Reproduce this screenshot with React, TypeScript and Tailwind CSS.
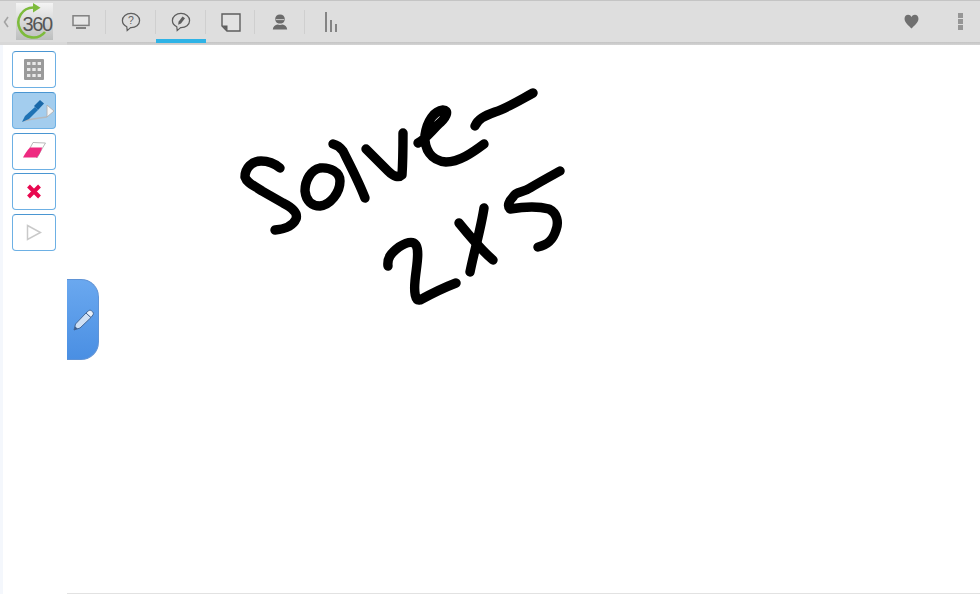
import type { ReactNode } from 'react';

function NavItem({ children, active, last }: { children: ReactNode; active?: boolean; last?: boolean }) {
  return (
    <div className={`relative flex h-full w-[49.8px] items-center justify-center pt-[1px] ${last ? '' : 'after:absolute after:right-0 after:top-[9px] after:h-[24px] after:w-px after:bg-[#cfcfcf]'}`}>
      {children}
      {active && <div className="absolute bottom-[-1px] left-0 h-[4px] w-full bg-[#2fb3e6]" />}
    </div>
  );
}

function ToolButton({ children, active }: { children: ReactNode; active?: boolean }) {
  return (
    <button
      className={`relative flex h-[37px] w-[44px] items-center justify-center rounded-[4px] border-[1.5px] border-[#6db0e4] border-t-[#4a96d2] ${active ? 'bg-[#a3cdee]' : 'bg-white'}`}
    >
      {children}
    </button>
  );
}

function Logo() {
  return (
    <div className="relative h-[37px] w-[37px] overflow-hidden bg-gradient-to-b from-[#f4f4f4] to-[#bcbebe]">
      <svg className="absolute left-0 top-0" width="37" height="37" viewBox="0 0 37 37" fill="none">
        <path d="M29 29 A15 15 0 1 1 17.5 4.5" stroke="#7dbb3c" strokeWidth="2.6" />
        <path d="M17 0 L24.5 4.8 L17 9.6 Z" fill="#7dbb3c" />
      </svg>
      <span className="absolute left-[6.5px] top-[9px] font-['Liberation_Sans',sans-serif] text-[20px] leading-[24px] tracking-[-1.4px] text-[#555]">
        360
      </span>
    </div>
  );
}

// the handwritten ink on the whiteboard
const inkStrokes = [
  'M280 168 C274 163 268 161 261 161 C252 161 245 168 245 177 C247 183 253 185 262 191 L283 203 C293 208 298 213 296 219 C293 226 285 229 275 230',
  'M320 168 C311 170 305 180 305 191 C306 201 312 206 320 206 C330 205 340 193 340 181 C340 172 330 167 320 168 Z',
  'M333 144 C337 145 340 147 343 151 C350 165 359 182 365 198',
  'M366 149 L388 171 C394 177 399 178 402 175 C403 160 403 147 403 133',
  'M418 143 C426 139 432 130 441 122 C447 116 449 110 443 110 C434 111 427 121 425 135 C424 149 431 161 446 162 C459 162 472 153 484 144',
  'M475 126 C478 119 484 116 495 112 C507 108 520 100 533 93',
  'M388 266 C387 258 391 253 399 247 C407 242 413 241 416 245 C420 252 416 268 415 281 C414 292 415 301 420 300 C431 294 443 288 456 283',
  'M459 223 C468 234 481 250 493 260',
  'M484 208 C481 228 474 252 470 272',
  'M560 171 C551 176 540 182 530 188 C523 193 516 191 513 197 C509 201 507 206 510 209 C522 207 538 206 549 209 C557 213 559 222 556 230 C553 240 548 245 538 247',
];

export default function App() {
  return (
    <div className="flex h-[594px] w-[980px] flex-col overflow-hidden bg-white font-['Liberation_Sans',sans-serif]">
      <header className="relative flex h-[45px] shrink-0 items-stretch border-t border-b-[3px] border-t-[#c4c4c4] border-b-[#d8d8d8] bg-[#dedede]">
        <div className="absolute bottom-[-3px] left-[67px] right-0 h-[3px] bg-gradient-to-b from-[#c4c4c4] to-[#d4d4d4]" />
        <div className="flex h-full items-center pl-[3px] pr-[7px]">
          <svg width="6" height="12" viewBox="0 0 6 12" fill="none">
            <path d="M5 1 L1.5 6 L5 11" stroke="#a3a3a3" strokeWidth="1.6" />
          </svg>
        </div>
        <div className="flex h-full items-center pb-[1px]">
          <Logo />
        </div>
        <div className="ml-[3.3px] flex h-full">
          <NavItem>
            <svg width="18" height="14" viewBox="0 0 18 14" fill="none">
              <rect x="1" y="0.8" width="16" height="9.6" fill="#e6e6e6" stroke="#808080" strokeWidth="1.5" />
              <path d="M4 13 H14" stroke="#808080" strokeWidth="2" />
            </svg>
          </NavItem>
          <NavItem>
            <svg width="20" height="21" viewBox="0 0 20 22" fill="none">
              <path d="M10 1.5 C5 1.5 1 4.8 1 9 C1 12 3 14.2 5.6 15.5 L6 19.5 L9.6 16.4 C15 16.6 19 13.4 19 9 C19 4.8 15 1.5 10 1.5 Z" stroke="#5e5e5e" strokeWidth="1.3" />
              <text x="10" y="13" textAnchor="middle" fontSize="11" fontFamily="Liberation Sans" fill="#5e5e5e">?</text>
            </svg>
          </NavItem>
          <NavItem active>
            <svg width="20" height="21" viewBox="0 0 20 22" fill="none">
              <path d="M10 1.5 C5 1.5 1 4.8 1 9 C1 12 3 14.2 5.6 15.5 L6 19.5 L9.6 16.4 C15 16.6 19 13.4 19 9 C19 4.8 15 1.5 10 1.5 Z" stroke="#5e5e5e" strokeWidth="1.3" />
              <path d="M7 13.4 L7.4 10.2 L11.6 4.8 L14.2 6.6 L10 12 Z" fill="#5e5e5e" />
            </svg>
          </NavItem>
          <NavItem>
            <svg width="20" height="19" viewBox="0 0 20 19" fill="none">
              <path d="M1 1 H19 V18 H6 L1 13 Z" stroke="#5e5e5e" strokeWidth="1.4" fill="#e2e2e2" />
              <path d="M1 12.5 H6.5 V18 Z" fill="#5e5e5e" />
            </svg>
          </NavItem>
          <NavItem>
            <svg width="16" height="16" viewBox="0 0 16 16">
              <path d="M8 0.5 C5 0.5 3.2 2.5 3.2 5 C3.2 6 3.5 7 4 7.8 C4.4 8.8 6 9.6 8 9.6 C10 9.6 11.6 8.8 12 7.8 C12.5 7 12.8 6 12.8 5 C12.8 2.5 11 0.5 8 0.5 Z" fill="#6b6b6b" />
              <path d="M3.8 5.6 H12.2" stroke="#e2e2e2" strokeWidth="0.8" />
              <path d="M0.8 15.5 C1 12.6 3.2 11 5.6 10.6 C7 11.2 9 11.2 10.4 10.6 C12.8 11 15 12.6 15.2 15.5 Z" fill="#6b6b6b" />
            </svg>
          </NavItem>
          <NavItem last>
            <svg className="ml-[1px]" width="14" height="20" viewBox="0 0 14 20" fill="none">
              <path d="M2 0 V20" stroke="#7a7a7a" strokeWidth="1.8" />
              <path d="M7 8 V20" stroke="#7a7a7a" strokeWidth="1.8" />
              <path d="M12 12 V20" stroke="#7a7a7a" strokeWidth="1.8" />
            </svg>
          </NavItem>
        </div>
        <div className="ml-auto flex h-full items-center gap-[39px] pr-[17px]">
          <svg width="15" height="15" viewBox="0 0 14 14">
            <path d="M7 13.5 C4.5 10.8 0.5 8 0.5 4.4 C0.5 2.2 2 0.8 3.8 0.8 C5.2 0.8 6.3 1.5 7 2.8 C7.7 1.5 8.8 0.8 10.2 0.8 C12 0.8 13.5 2.2 13.5 4.4 C13.5 8 9.5 10.8 7 13.5 Z" fill="#707070" />
          </svg>
          <div className="flex flex-col gap-[1px]">
            <div className="h-[5px] w-[5px] bg-[#969696]" />
            <div className="h-[5px] w-[5px] bg-[#969696]" />
            <div className="h-[5px] w-[5px] bg-[#969696]" />
          </div>
        </div>
      </header>

      <div className="flex min-h-0 flex-1">
        <aside className="flex w-[67px] shrink-0 flex-col gap-[3.75px] border-l-[3px] border-l-[#f4f7fc] pl-[9px] pt-[6px]">
          <ToolButton>
            <svg width="20" height="21" viewBox="0 0 20 21">
              <rect width="20" height="21" rx="1" fill="#9a9a9a" />
              <g fill="#e8e8e8">
                <rect x="3" y="3" width="3.4" height="3" />
                <rect x="8.3" y="3" width="3.4" height="3" />
                <rect x="13.6" y="3" width="3.4" height="3" />
                <rect x="3" y="9" width="3.4" height="3" />
                <rect x="8.3" y="9" width="3.4" height="3" />
                <rect x="13.6" y="9" width="3.4" height="3" />
                <rect x="3" y="15" width="3.4" height="3" />
                <rect x="8.3" y="15" width="3.4" height="3" />
                <rect x="13.6" y="15" width="3.4" height="3" />
              </g>
            </svg>
          </ToolButton>
          <ToolButton active>
            <svg className="absolute left-[8px] top-[6px]" width="26" height="24" viewBox="0 0 26 24" fill="none">
              <path d="M2 22 C10 20 18 19 26 18" stroke="#b4b8bd" strokeWidth="1.6" />
              <path d="M1 23 L4 17 L14 8 L17 11 L8 20 Z" fill="#1f73b5" />
              <path d="M13 7 L19 1 L23 4.5 L17 11 Z" fill="#1a68a8" />
            </svg>
            <svg className="absolute right-[0px] top-[11px]" width="9" height="14" viewBox="0 0 9 14">
              <path d="M1 1 L8 7 L1 13 Z" fill="#f5f5f5" stroke="#b0b0b0" strokeWidth="0.9" />
            </svg>
          </ToolButton>
          <ToolButton>
            <svg width="24" height="18" viewBox="0 0 24 18" fill="none">
              <path d="M11 0.5 L23.5 1 L20.5 6 L15 16 L8 6 Z" fill="#fff" stroke="#a8a8a8" strokeWidth="0.8" />
              <path d="M8 5.5 L20 5.5 C20 8 17 13 15 15.5 L1 15.5 C3 12 5 8 8 5.5 Z" fill="#ee2a80" />
            </svg>
          </ToolButton>
          <ToolButton>
            <svg width="16" height="15" viewBox="0 0 16 15" fill="none">
              <path d="M2.5 2 L13.5 13 M13.5 2 L2.5 13" stroke="#e8084f" strokeWidth="4" />
            </svg>
          </ToolButton>
          <ToolButton>
            <svg width="16" height="17" viewBox="0 0 16 17" fill="none">
              <path d="M1.5 1.5 L14.5 8.5 L1.5 15.5 Z" stroke="#c9c9c9" strokeWidth="1.5" />
            </svg>
          </ToolButton>
        </aside>

        <main className="relative flex-1 border-b border-b-[#e2e2e2]">
          <svg className="absolute left-0 top-0" width="913" height="549" viewBox="67 45 913 549" fill="none">
            {inkStrokes.map((d) => (
              <path key={d} d={d} stroke="#000" strokeWidth="9.4" strokeLinecap="round" strokeLinejoin="round" />
            ))}
          </svg>
          <div className="absolute left-0 top-[234px] flex h-[81px] w-[32px] items-center justify-center rounded-r-[18px] border border-l-0 border-[#5f93d6] bg-gradient-to-b from-[#6aa8ef] to-[#4a8fe3]">
            <svg width="24" height="24" viewBox="0 0 24 24" fill="none">
              <path d="M3 22 L4.5 16 L15 5 L20 9.5 L9 20 Z" fill="#cfe0f5" stroke="#3c5f8f" strokeWidth="0.9" />
              <path d="M15 5 L17.5 2.8 C18.5 2 19.5 2 20.5 2.8 L21.8 4 C22.6 5 22.6 6 21.8 7 L20 9.5 Z" fill="#eaf1fa" stroke="#3c5f8f" strokeWidth="0.9" />
              <path d="M3 22 L4 18.2 L6.8 20.8 Z" fill="#3c5f8f" />
            </svg>
          </div>
        </main>
      </div>
    </div>
  );
}
